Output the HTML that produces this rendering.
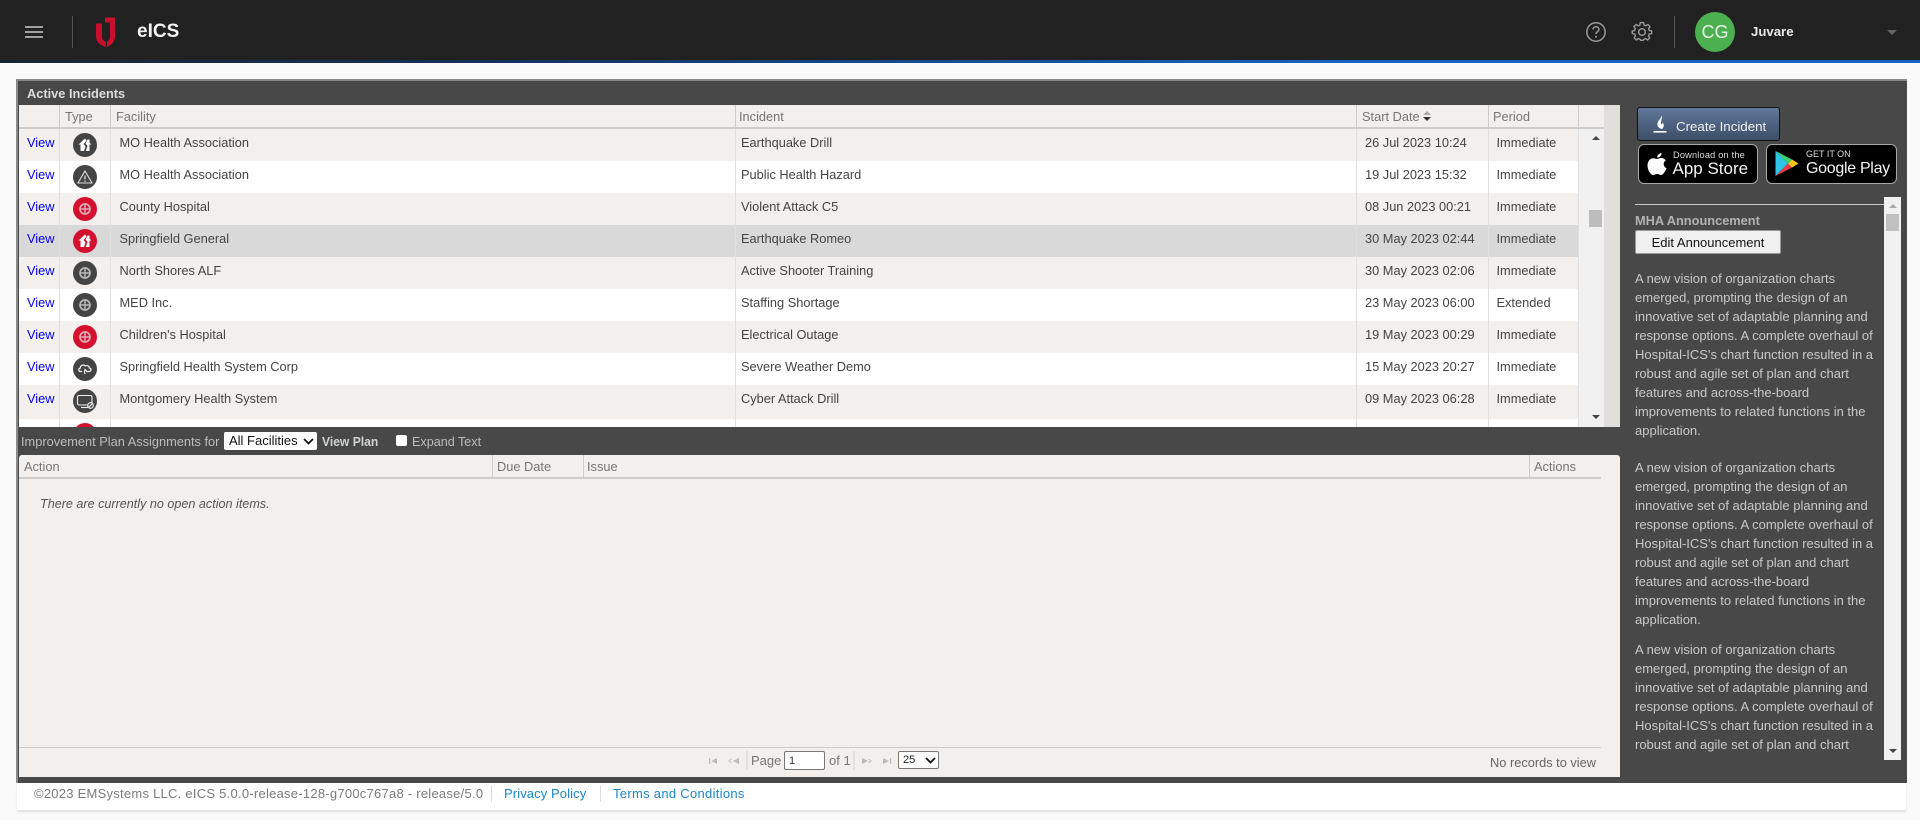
<!DOCTYPE html>
<html><head><meta charset="utf-8"><title>eICS</title>
<style>
*{box-sizing:border-box}
html,body{margin:0;padding:0;width:1920px;height:820px;overflow:hidden;background:#fafafa;font-family:"Liberation Sans",sans-serif}
.a{position:absolute}
#hdr{left:0;top:0;width:1920px;height:60px;background:#212121}
#blue{left:0;top:60px;width:1920px;height:3px;background:linear-gradient(90deg,#1b2530 0,#16305c 25%,#1565c0 70%,#1565c0 100%)}
.r{position:absolute;left:19px;width:1559px;height:32px;font-size:12.8px;color:#444}
.r span{position:absolute;top:5.5px;line-height:16px;white-space:nowrap}
.r .v{left:8px;color:#0000ff}
.r .f{left:100.5px}
.r .i{left:722px}
.r .d{left:1346px;top:6px}
.r .p{left:1477.5px;top:6px}
.r svg{position:absolute;left:54px;top:4px}
.o{background:#f2efec}.w{background:#fff}.s{background:#d9d9d9}
.vl{position:absolute;width:1px;background:#e0e0e0}
.hl{position:absolute;width:2px;background:#ccc}
.h{position:absolute;font-size:12.8px;color:#777;line-height:16px;white-space:nowrap}
.ann{position:absolute;left:1635px;width:245px;font-size:13px;line-height:19px;color:#c9c9c9;margin:0}
</style></head><body>
<svg width="0" height="0" style="position:absolute">
<defs>
<g id="quake"><path d="M12 5.5L5.5 11.5H7.5V18H11L12.5 13.5 10.5 11 13.5 7.5 12 5.5ZM14.5 6.5L12.5 10.5 14.5 13 12.8 18H16.5V11.5H18.5L16.5 9.6V6.5Z" fill="#fff"/></g>
<g id="warn" fill="none" stroke="#ddd" stroke-width="1.1"><path d="M12 6L19 18H5Z"/><path d="M12 10.5V14.5M12 15.6V16.8" stroke-width="1.3"/></g>
<g id="cross" fill="none" stroke="#e6e6e6" opacity=".72"><circle cx="12" cy="12" r="5" stroke-width="1.7"/><path d="M12 6.5V17.5M6.5 12H17.5" stroke-width="1.5"/></g>
<g id="cloud" fill="none" stroke="#f2f2f2" stroke-width="1.2"><path d="M9 14.5H7.5C5.5 14.5 5 11.5 7.3 11 7.3 8.5 10.5 7 12.3 9 14.5 7.8 16.5 9.5 16.3 11 18.7 11.3 18.5 14.5 16 14.5H14L12 12.5 11.5 15 12 17"/></g>
<g id="mon" fill="none" stroke="#eee" stroke-width="1.1"><rect x="4.5" y="6.5" width="14.5" height="9.5" rx="1.5"/><path d="M8 18.5H15"/><circle cx="17.5" cy="16.5" r="2.8" fill="#444"/><path d="M15.7 18.3L19.3 14.7"/></g>
</defs></svg>

<div id="hdr" class="a"></div><div id="blue" class="a"></div>
<!-- header left -->
<div class="a" style="left:25px;top:26px;width:18px;height:2px;background:#a0a0a0"></div>
<div class="a" style="left:25px;top:31px;width:18px;height:2px;background:#a0a0a0"></div>
<div class="a" style="left:25px;top:36px;width:18px;height:2px;background:#a0a0a0"></div>
<div class="a" style="left:72px;top:16px;width:1px;height:32px;background:#555"></div>
<svg class="a" style="left:96px;top:17px" width="20" height="30" viewBox="0 0 20 30"><path d="M0 6.5H6V19.5C6 22 7.5 24 10 25V30C3.5 28 0 25 0 19Z" fill="#c8102e"/><path d="M9 0.5H19V19C19 24.5 15.5 28 11 30V24.5C13 23.5 14 22 14 19.5V5.5H9Z" fill="#c8102e"/></svg>
<div class="a" style="left:137px;top:20px;font-size:19px;line-height:24px;font-weight:bold;color:#f2f2f2">eICS</div>
<!-- header right -->
<svg class="a" style="left:1585px;top:21px" width="22" height="22" viewBox="0 0 22 22"><circle cx="11" cy="11" r="9.2" fill="none" stroke="#9a9a9a" stroke-width="1.5"/><path d="M8 8.5C8 6.8 9.4 5.8 11 5.8S14 6.9 14 8.4C14 10.5 11 10.5 11 13" fill="none" stroke="#9a9a9a" stroke-width="1.5"/><circle cx="11" cy="15.8" r="1" fill="#9a9a9a"/></svg>
<svg class="a" style="left:1631px;top:21px" width="22" height="22" viewBox="0 0 24 24"><path d="M10 2H14L14.5 5 16.8 6 19.3 4.3 22 7 20.2 9.5 21.2 11.9 24 12.4V15.6L21 16.2 20 18.5 21.6 21 19 23.5 16.5 21.8 14.2 22.8 13.6 24H10.4L9.8 22.8 7.5 21.8 5 23.5 2.4 21 4 18.5 3 16.2 0 15.6V12.4L2.8 11.9 3.8 9.5 2 7 4.7 4.3 7.2 6 9.5 5Z" transform="translate(1.4 0) scale(.88)" fill="none" stroke="#9a9a9a" stroke-width="1.7"/><circle cx="12" cy="12" r="3.6" fill="none" stroke="#9a9a9a" stroke-width="1.6"/></svg>
<div class="a" style="left:1674px;top:16px;width:1px;height:32px;background:#555"></div>
<div class="a" style="left:1695px;top:12px;width:40px;height:40px;border-radius:50%;background:#4caf50;color:#eaf5ea;font-size:18px;line-height:40px;text-align:center">CG</div>
<div class="a" style="left:1751px;top:24px;font-size:13.2px;line-height:16px;font-weight:bold;color:#e8e8e8">Juvare</div>
<div class="a" style="left:1887px;top:30px;width:0;height:0;border-left:5px solid transparent;border-right:5px solid transparent;border-top:5px solid #666"></div>

<!-- panel -->
<div class="a" style="left:16px;top:79px;width:1891px;height:704px;background:#484848;border-left:2px solid #8a8a8a;border-top:2px solid #8a8a8a"></div>
<div class="a" style="left:27px;top:86px;font-size:12.8px;line-height:16px;font-weight:bold;color:#dcdcdc">Active Incidents</div>

<!-- top grid -->
<div class="a" style="left:19px;top:105px;width:1601px;height:322px;background:#e0dfdb"></div>
<div class="a" style="left:19px;top:105px;width:1585px;height:24px;background:#f2efec;border-bottom:2px solid #ccc"></div>
<div class="a" style="left:1578px;top:129px;width:26px;height:298px;background:#f1f1f1"></div>
<div class="r o" style="top:129px"><span class="v">View</span><svg width="24" height="24" viewBox="0 0 24 24"><circle cx="12" cy="12" r="12" fill="#444"/><use href="#quake"/></svg><span class="f">MO Health Association</span><span class="i">Earthquake Drill</span><span class="d">26 Jul 2023 10:24</span><span class="p">Immediate</span></div>
<div class="r w" style="top:161px"><span class="v">View</span><svg width="24" height="24" viewBox="0 0 24 24"><circle cx="12" cy="12" r="12" fill="#444"/><use href="#warn"/></svg><span class="f">MO Health Association</span><span class="i">Public Health Hazard</span><span class="d">19 Jul 2023 15:32</span><span class="p">Immediate</span></div>
<div class="r o" style="top:193px"><span class="v">View</span><svg width="24" height="24" viewBox="0 0 24 24"><circle cx="12" cy="12" r="12" fill="#d50f2e"/><use href="#cross"/></svg><span class="f">County Hospital</span><span class="i">Violent Attack C5</span><span class="d">08 Jun 2023 00:21</span><span class="p">Immediate</span></div>
<div class="r s" style="top:225px"><span class="v">View</span><svg width="24" height="24" viewBox="0 0 24 24"><circle cx="12" cy="12" r="12" fill="#d50f2e"/><use href="#quake"/></svg><span class="f">Springfield General</span><span class="i">Earthquake Romeo</span><span class="d">30 May 2023 02:44</span><span class="p">Immediate</span></div>
<div class="r o" style="top:257px"><span class="v">View</span><svg width="24" height="24" viewBox="0 0 24 24"><circle cx="12" cy="12" r="12" fill="#444"/><use href="#cross"/></svg><span class="f">North Shores ALF</span><span class="i">Active Shooter Training</span><span class="d">30 May 2023 02:06</span><span class="p">Immediate</span></div>
<div class="r w" style="top:289px"><span class="v">View</span><svg width="24" height="24" viewBox="0 0 24 24"><circle cx="12" cy="12" r="12" fill="#444"/><use href="#cross"/></svg><span class="f">MED Inc.</span><span class="i">Staffing Shortage</span><span class="d">23 May 2023 06:00</span><span class="p">Extended</span></div>
<div class="r o" style="top:321px"><span class="v">View</span><svg width="24" height="24" viewBox="0 0 24 24"><circle cx="12" cy="12" r="12" fill="#d50f2e"/><use href="#cross"/></svg><span class="f">Children's Hospital</span><span class="i">Electrical Outage</span><span class="d">19 May 2023 00:29</span><span class="p">Immediate</span></div>
<div class="r w" style="top:353px"><span class="v">View</span><svg width="24" height="24" viewBox="0 0 24 24"><circle cx="12" cy="12" r="12" fill="#444"/><use href="#cloud"/></svg><span class="f">Springfield Health System Corp</span><span class="i">Severe Weather Demo</span><span class="d">15 May 2023 20:27</span><span class="p">Immediate</span></div>
<div class="r o" style="top:385px;height:34px"><span class="v">View</span><svg width="24" height="24" viewBox="0 0 24 24"><circle cx="12" cy="12" r="12" fill="#444"/><use href="#mon"/></svg><span class="f">Montgomery Health System</span><span class="i">Cyber Attack Drill</span><span class="d">09 May 2023 06:28</span><span class="p">Immediate</span></div>
<div class="r w" style="top:419px;height:8px;overflow:hidden"><svg width="24" height="24" viewBox="0 0 24 24"><circle cx="12" cy="12" r="12" fill="#d50f2e"/></svg></div>
<!-- col lines -->
<div class="vl" style="left:59px;top:129px;height:298px"></div>
<div class="vl" style="left:110px;top:129px;height:298px"></div>
<div class="vl" style="left:735px;top:129px;height:298px"></div>
<div class="vl" style="left:1356px;top:129px;height:298px"></div>
<div class="vl" style="left:1488px;top:129px;height:298px"></div>
<div class="vl" style="left:1578px;top:129px;height:298px"></div>
<div class="hl" style="left:59px;top:105px;height:23px;width:1px"></div>
<div class="hl" style="left:110px;top:105px;height:23px;width:1px"></div>
<div class="hl" style="left:735px;top:105px;height:23px;width:1px"></div>
<div class="hl" style="left:1356px;top:105px;height:23px;width:1px"></div>
<div class="hl" style="left:1488px;top:105px;height:23px;width:1px"></div>
<div class="hl" style="left:1578px;top:105px;height:23px;width:1px"></div>
<div class="h" style="left:65px;top:109px">Type</div>
<div class="h" style="left:116px;top:109px">Facility</div>
<div class="h" style="left:739px;top:109px">Incident</div>
<div class="h" style="left:1362px;top:109px">Start Date</div>
<div class="a" style="left:1423px;top:111px;width:0;height:0;border-left:4px solid transparent;border-right:4px solid transparent;border-bottom:4.5px solid #aaa"></div>
<div class="a" style="left:1423px;top:117px;width:0;height:0;border-left:4px solid transparent;border-right:4px solid transparent;border-top:4.5px solid #333"></div>
<div class="h" style="left:1493px;top:109px">Period</div>
<!-- scrollbar -->
<div class="a" style="left:1592px;top:136px;width:0;height:0;border-left:4px solid transparent;border-right:4px solid transparent;border-bottom:4px solid #444"></div>
<div class="a" style="left:1589px;top:210px;width:13px;height:17px;background:#bdbdbd"></div>
<div class="a" style="left:1592px;top:415px;width:0;height:0;border-left:4px solid transparent;border-right:4px solid transparent;border-top:4px solid #444"></div>

<!-- improvement bar -->
<div class="a" style="left:21px;top:434px;font-size:12.8px;line-height:16px;color:#bdbdbd;white-space:nowrap">Improvement Plan Assignments for</div>
<div class="a" style="left:224px;top:432px;width:93px;height:18px;background:#fff;border-radius:2px;font-size:13px;line-height:18px;padding-left:5px;color:#111">All Facilities</div>
<svg class="a" style="left:303px;top:438px" width="11" height="7" viewBox="0 0 11 7"><path d="M1 1L5.5 5.5 10 1" fill="none" stroke="#111" stroke-width="1.8"/></svg>
<div class="a" style="left:322px;top:434px;font-size:13px;line-height:16px;color:#cfd3d3;font-weight:bold;transform:scaleX(.93);transform-origin:0 0;white-space:nowrap">View Plan</div>
<div class="a" style="left:396px;top:435px;width:11px;height:11px;background:#fff;border-radius:2px"></div>
<div class="a" style="left:412px;top:434px;font-size:12.6px;line-height:16px;color:#bdbdbd;white-space:nowrap">Expand Text</div>

<!-- lower grid -->
<div class="a" style="left:19px;top:455px;width:1601px;height:322px;background:#f2efec;border-radius:3px 3px 0 0"></div>
<div class="a" style="left:19px;top:477px;width:1582px;height:2px;background:#ccc"></div>
<div class="hl" style="left:492px;top:455px;height:22px;width:1px"></div>
<div class="hl" style="left:583px;top:455px;height:22px;width:1px"></div>
<div class="hl" style="left:1529px;top:455px;height:22px;width:1px"></div>
<div class="h" style="left:24px;top:459px">Action</div>
<div class="h" style="left:497px;top:459px">Due Date</div>
<div class="h" style="left:587px;top:459px">Issue</div>
<div class="h" style="left:1534px;top:459px">Actions</div>
<div class="a" style="left:40px;top:496px;font-size:12.6px;line-height:16px;font-style:italic;color:#555;white-space:nowrap">There are currently no open action items.</div>
<div class="a" style="left:19px;top:747px;width:1582px;height:1px;background:#ccc"></div>
<!-- pager -->
<svg class="a" style="left:708px;top:756px" width="34" height="10" viewBox="0 0 34 10" fill="#bbb"><path d="M1 2V8H2.2V2ZM9 2V8L3.5 5Z"/><path d="M20 5L23.5 2.5V3.5L21.5 5 23.5 6.5V7.5ZM31 2V8L25 5Z"/></svg>
<div class="a" style="left:746px;top:751px;width:2px;height:19px;background:#e2e0dd"></div>
<div class="a" style="left:751px;top:753px;font-size:13px;line-height:16px;color:#777">Page</div>
<div class="a" style="left:784px;top:751px;width:41px;height:19px;background:#fff;border:1px solid #777;border-radius:2px;font-size:11px;line-height:18px;padding-left:4px;color:#333">1</div>
<div class="a" style="left:829px;top:753px;font-size:13px;line-height:16px;color:#777">of 1</div>
<div class="a" style="left:853px;top:751px;width:2px;height:19px;background:#e2e0dd"></div>
<svg class="a" style="left:860px;top:756px" width="34" height="10" viewBox="0 0 34 10" fill="#bbb"><path d="M2 2V8L8 5ZM8.5 2.5L12 5 8.5 7.5V6.5L10.5 5 8.5 3.5Z"/><path d="M23 2V8L29 5ZM30 2V8H31.2V2Z"/></svg>
<div class="a" style="left:898px;top:751px;width:41px;height:18px;background:#fff;border:1px solid #777;border-radius:2px;font-size:11px;line-height:17px;padding-left:4px;color:#222">25</div>
<svg class="a" style="left:925px;top:757px" width="11" height="7" viewBox="0 0 11 7"><path d="M1 1L5.5 5.5 10 1" fill="none" stroke="#111" stroke-width="1.8"/></svg>
<div class="a" style="right:324px;top:755px;font-size:12.8px;line-height:16px;color:#666;white-space:nowrap">No records to view</div>

<!-- sidebar -->
<div class="a" style="left:1637px;top:107px;width:143px;height:34px;border:1px solid #111;border-radius:3px;background:linear-gradient(#60789b,#3c4e68)"></div>
<svg class="a" style="left:1652px;top:115px" width="16" height="19" viewBox="0 0 16 19"><path d="M9 0C10 3 6 5 5.5 8.5 5 11.5 7 13.5 10 14 12 12.5 12.5 9.5 10.5 7.5 10.5 9 9.5 9.5 9 9 8.5 6 11 3 9 0Z" fill="#fff"/><rect x="1.5" y="16" width="13" height="1.6" fill="#fff"/></svg>
<div class="a" style="left:1676px;top:119px;font-size:13.3px;line-height:16px;color:#f2f2f2;white-space:nowrap">Create Incident</div>

<div class="a" style="left:1638px;top:144px;width:120px;height:40px;background:#000;border:1px solid #a6a6a6;border-radius:6px"></div>
<svg class="a" style="left:1647px;top:153px" width="20" height="23" viewBox="0 0 20 23"><path d="M14.5 0C14.7 2.3 12.5 4.8 10.2 4.6 9.9 2.4 12.2 0.2 14.5 0ZM10 6C11.2 6 12.5 5 14.4 5 16 5 17.8 5.9 18.8 7.5 15.6 9.2 16.2 13.9 19.5 15.2 18.6 17.6 16.2 22 14 22 12.7 22 12 21 10.2 21 8.4 21 7.6 22 6.2 22 3.5 22 0.5 16.6 0.5 12.6 0.5 8.6 3 5.2 6 5.2 7.6 5.2 8.9 6 10 6Z" fill="#fff"/></svg>
<div class="a" style="left:1673px;top:150px;font-size:9.2px;line-height:11px;color:#ddd;letter-spacing:.2px;white-space:nowrap">Download on the</div>
<div class="a" style="left:1672.5px;top:159px;font-size:17px;line-height:20px;color:#f4f4f4;white-space:nowrap">App Store</div>

<div class="a" style="left:1766px;top:144px;width:131px;height:40px;background:#000;border:1px solid #a6a6a6;border-radius:6px"></div>
<svg class="a" style="left:1775px;top:150px" width="24" height="27" viewBox="0 0 24 27"><path d="M0.5 1V26L13 13.5Z" fill="#2fc5e8"/><path d="M0.5 1L13 13.5 17 9.5Z" fill="#38d36a"/><path d="M0.5 26L13 13.5 17 17.5Z" fill="#ec3a48"/><path d="M17 9.5L13 13.5 17 17.5 23.5 13.5Z" fill="#fcc419"/></svg>
<div class="a" style="left:1806px;top:149px;font-size:9px;line-height:11px;color:#ddd;white-space:nowrap">GET IT ON</div>
<div class="a" style="left:1806px;top:158.5px;font-size:16px;line-height:20px;letter-spacing:-.3px;color:#f4f4f4;white-space:nowrap">Google Play</div>

<div class="a" style="left:1635px;top:204px;width:249px;height:1px;background:#c8c8c8"></div>
<div class="a" style="left:1884px;top:197px;width:17px;height:563px;background:#f1f1f1"></div>
<div class="a" style="left:1889px;top:204px;width:0;height:0;border-left:4px solid transparent;border-right:4px solid transparent;border-bottom:4px solid #aaa"></div>
<div class="a" style="left:1886px;top:214px;width:13px;height:17px;background:#c0c0c0"></div>
<div class="a" style="left:1889px;top:749px;width:0;height:0;border-left:4px solid transparent;border-right:4px solid transparent;border-top:4px solid #444"></div>

<div class="a" style="left:1635px;top:213px;font-size:12.8px;line-height:16px;font-weight:bold;color:#b2b2b2;white-space:nowrap">MHA Announcement</div>
<div class="a" style="left:1635px;top:230px;width:146px;height:24px;background:#f0f0f0;border:1px solid #999;border-radius:2px;font-size:13px;line-height:24px;text-align:center;color:#111">Edit Announcement</div>

<p class="ann" style="top:269px">A new vision of organization charts emerged, prompting the design of an innovative set of adaptable planning and response options. A complete overhaul of Hospital-ICS's chart function resulted in a robust and agile set of plan and chart features and across-the-board improvements to related functions in the application.</p>
<p class="ann" style="top:458px">A new vision of organization charts emerged, prompting the design of an innovative set of adaptable planning and response options. A complete overhaul of Hospital-ICS's chart function resulted in a robust and agile set of plan and chart features and across-the-board improvements to related functions in the application.</p>
<p class="ann" style="top:640px;height:114px;overflow:hidden">A new vision of organization charts emerged, prompting the design of an innovative set of adaptable planning and response options. A complete overhaul of Hospital-ICS's chart function resulted in a robust and agile set of plan and chart</p>

<!-- footer -->
<div class="a" style="left:17px;top:783px;width:1889px;height:27px;background:#fff;box-shadow:0 2px 2px rgba(0,0,0,.1)"></div>
<div class="a" style="left:34px;top:786px;font-size:13px;line-height:16px;letter-spacing:.25px;color:#7a7a7a;white-space:nowrap">©2023 EMSystems LLC. eICS 5.0.0-release-128-g700c767a8 - release/5.0</div>
<div class="a" style="left:491px;top:786px;width:1px;height:16px;background:#ddd"></div>
<div class="a" style="left:504px;top:786px;font-size:13px;line-height:16px;letter-spacing:.1px;color:#1c86c8;white-space:nowrap">Privacy Policy</div>
<div class="a" style="left:600px;top:786px;width:1px;height:16px;background:#ddd"></div>
<div class="a" style="left:613px;top:786px;font-size:13px;line-height:16px;letter-spacing:.3px;color:#1c86c8;white-space:nowrap">Terms and Conditions</div>
</body></html>
